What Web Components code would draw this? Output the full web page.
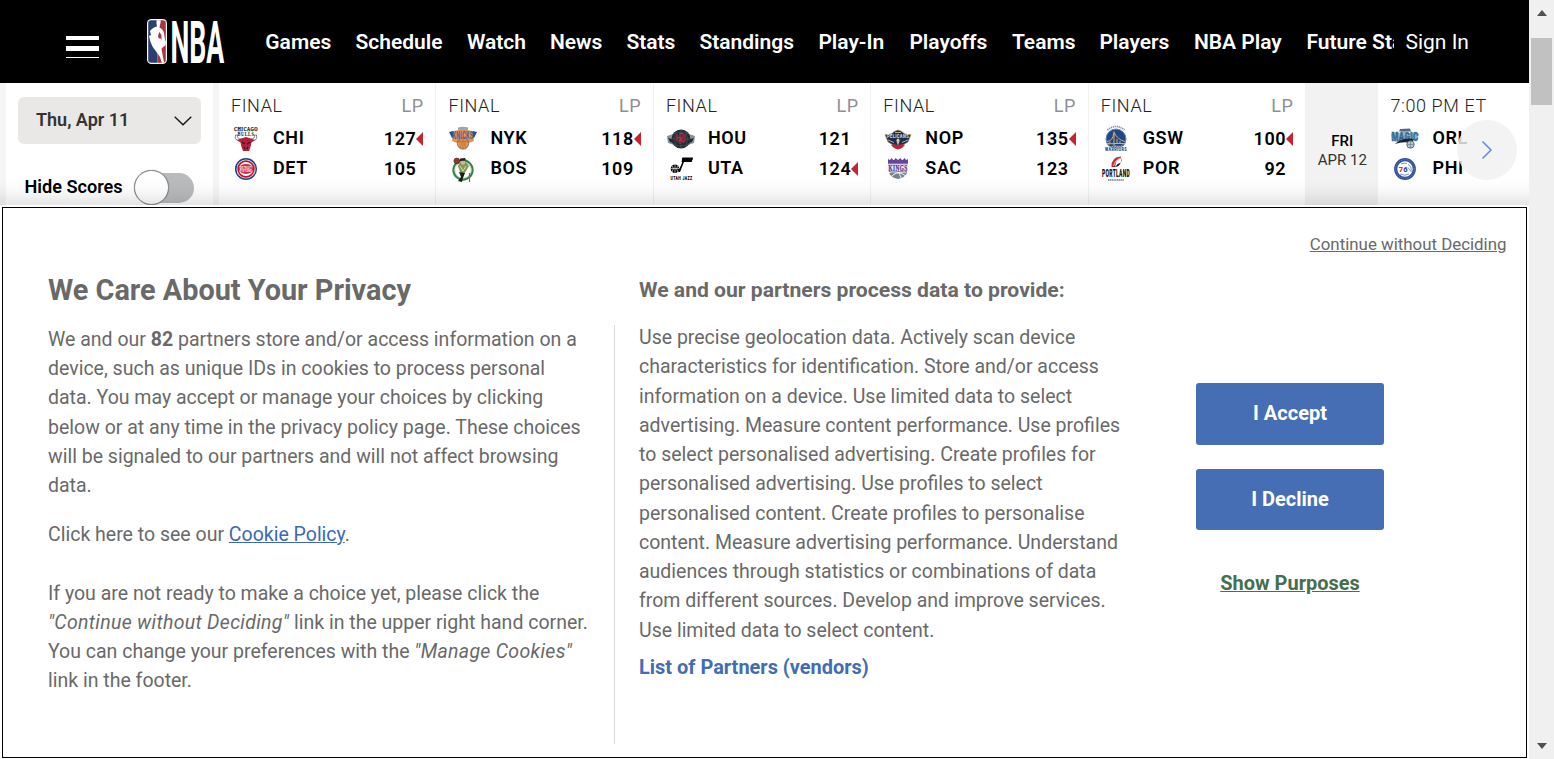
<!DOCTYPE html>
<html lang="en">
<head>
<meta charset="utf-8">
<title>NBA</title>
<style>
html,body{margin:0;height:100%;overflow:hidden;background:#fff}
body{font-family:Roboto,"Liberation Sans",sans-serif}
</style>
</head>
<body>
<nba-page></nba-page>
<script>
const define = (name, html, setup) => {
  const t = document.createElement('template');
  t.innerHTML = html;
  customElements.define(name, class extends HTMLElement {
    connectedCallback() {
      if (this.shadowRoot) return;
      const r = this.attachShadow({mode: 'open'});
      r.append(t.content.cloneNode(true));
      if (setup) setup(this, r);
    }
  });
};

const LOGOS = {
  CHI: `<g font-family="Liberation Serif" font-weight="700" text-anchor="middle"><text x="15" y="7" font-size="6" textLength="24" lengthAdjust="spacingAndGlyphs" fill="#111" stroke="#111" stroke-width=".25">CHICAGO</text><text x="15" y="12" font-size="5.600" textLength="17" lengthAdjust="spacingAndGlyphs" fill="#111">BULLS</text></g><path d="M4.500 11Q3 17 10 17L10 15Q6 15 6.500 11ZM25.500 11Q27 17 20 17L20 15Q24 15 23.500 11Z" fill="#fff" stroke="#333" stroke-width=".6"/><path d="M6 16L10 14.500L15 13L20 14.500L24 16L20.500 18.500L19.500 23L18 27H12L10.500 23L9.500 18.500Z" fill="#b4203c"/><path d="M11 18L14 20M19 18L16 20M13 23L14 25M17 23L16 25" stroke="#35121b" stroke-width="1.100"/>`,
  DET: `<circle cx="15" cy="15" r="10.300" fill="#e4e7ee" stroke="#1d428a" stroke-width="1.500"/><circle cx="15" cy="15" r="7.900" fill="#fff" stroke="#c8102e" stroke-width="1.600"/><ellipse cx="15" cy="15" rx="7.200" ry="5" fill="#c8304a"/><g font-family="Roboto" font-weight="700" text-anchor="middle" fill="#fff" font-size="4"><text x="15" y="14.800" textLength="12" lengthAdjust="spacingAndGlyphs">DETROIT</text><text x="15" y="18.200" textLength="12" lengthAdjust="spacingAndGlyphs">PISTONS</text></g>`,
  NYK: `<path d="M1 8L5 7L7 9H23L25 7L29 8L26 14H4Z" fill="#2b4f95"/><path d="M10 3.500Q15 2 20 3.500V6H10Z" fill="#8ba9ce"/><path d="M4 17L6 7L15 5L24 7L26 17L21 19H9Z" fill="#e2944a"/><circle cx="15" cy="19.500" r="5.700" fill="#ee9142" stroke="#3a6398" stroke-width=".7"/><path d="M9.500 18Q15 16 20.500 18M15 14V25M11 15.500Q15 19 12 24M19 15.500Q15 19 18 24" fill="none" stroke="#a86b3b" stroke-width=".7"/><text x="15" y="15" font-family="Roboto" font-weight="700" font-size="10" text-anchor="middle" textLength="21" lengthAdjust="spacingAndGlyphs" fill="#4a6590">KNICKS</text>`,
  BOS: `<circle cx="15" cy="16" r="9.600" fill="#fff" stroke="#37854f" stroke-width="2.200"/><circle cx="15" cy="16" r="8.200" fill="none" stroke="#abc9b0" stroke-width=".7"/><circle cx="8.800" cy="7" r="2.900" fill="#8a3b31" stroke="#50251c" stroke-width=".6"/><path d="M12 8L18 8L21 12L18 17L16 20L12 18L10 12Z" fill="#7e9b55"/><circle cx="15" cy="8.500" r="2.300" fill="#d5b294"/><path d="M11 18L17 19L15 24L14 28L10 27L13 23Z" fill="#171f19"/><path d="M12 4.500L17 4L18 6.500L12 7Z" fill="#222"/><path d="M12 12L15 17L18 12" stroke="#e6d4a7" fill="none"/><path d="M21.500 19V28" stroke="#c8463d" stroke-width="1.200"/>`,
  HOU: `<path d="M1 12L7 10L23 10L29 12L28 19L22 21L19 17H11L8 21L2 19Z" fill="#8a949a"/><path d="M2 13.500Q5 16 8 15L7 19L4 18ZM28 13.500Q25 16 22 15L23 19L26 18Z" fill="#22292e"/><circle cx="15" cy="15" r="9.500" fill="#252c32"/><path d="M7 10Q15 6 23 10M6 15H24M7 20Q15 24 23 20M15 6V24M10 7Q7 15 10 23M20 7Q23 15 20 23" fill="none" stroke="#555f66" stroke-width=".5"/><path d="M14 20V9.500H17V14H14L18 19M11 10V13.500H14M11 17.500V14M19 10V17H12" fill="none" stroke="#c32c47" stroke-width="1.100"/>`,
  UTA: `<path d="M12 18L16 9V4H27L25.500 8H18L14 18Z"/><path d="M16.500 3.500H27L25.500 8H15.500Z"/><circle cx="9" cy="14.800" r="4.300"/><path d="M5 14.500H13M9 10V19M6 11.500Q9 14.500 6 18M12 11.500Q9 14.500 12 18" stroke="#fff" stroke-width=".6" fill="none"/><text x="15.500" y="25.500" font-family="Roboto" font-weight="900" font-size="5" text-anchor="middle" textLength="22" lengthAdjust="spacingAndGlyphs">UTAH JAZZ</text>`,
  NOP: `<path d="M2 10.500Q9 11 11 7.500L15 6L19 7.500Q21 11 28 10.500L25 18L20 21L18 24H12L10 21L5 18Z" fill="#17304f" stroke="#a69371" stroke-width=".7"/><path d="M8 21L12 20L15 22L18 20L22 21L19 24L15 25.500L11 24Z" fill="#c51f39"/><path d="M13 16L15 14L17 16L15 23Z" fill="#e2c0a5" stroke="#473544" stroke-width=".6"/><path d="M5 16L11 18.500M25 16L19 18.500M12 8.500H18" stroke="#bba98a" stroke-width="1"/><text x="15" y="14" font-family="Roboto" font-weight="700" font-size="6" text-anchor="middle" textLength="22" lengthAdjust="spacingAndGlyphs" fill="#e8e3db">PELICANS</text>`,
  SAC: `<path d="M5 4Q6 8 8.500 4Q11 8 12.500 4L15 6L17.500 4Q19 8 21.500 4Q24 8 25 4V10H5Z" fill="#64459b"/><path d="M5 10H25V16.500H5Z" fill="#efeaf5"/><path d="M6 17H24L23.500 20Q21 24 15 25Q9 24 6.500 20Z" fill="#78848d"/><path d="M6 18.500Q13 16 23.500 22M8 23Q11 18 23 18M15 18Q17 20 18.500 25" fill="none" stroke="#fff" stroke-width=".9"/><path d="M5 10H25" stroke="#b5a1d4" stroke-width="1"/><text x="15" y="16.500" font-family="Liberation Serif" font-weight="700" font-size="7.200" text-anchor="middle" textLength="19" lengthAdjust="spacingAndGlyphs" fill="#59358c" stroke="#59358c" stroke-width=".25">KINGS</text>`,
  GSW: `<circle cx="15" cy="15" r="10" fill="#214688" stroke="#6d86ae" stroke-width="1"/><path d="M6 17.500Q12 17 13 8.500Q17 16 24 17.500M13 7.500V22M6 19.500H24M9 17.500V20M16 15V20M19 17V20" fill="none" stroke="#d9b05c" stroke-width="1"/><path d="M7 21Q11 18 15 22Q19 24 23 20" fill="none" stroke="#a08d5c" stroke-width=".8"/><text x="15" y="27.300" font-family="Roboto" font-weight="900" font-size="5.600" text-anchor="middle" textLength="22" lengthAdjust="spacingAndGlyphs" fill="#244988" stroke="#fff" stroke-width=".8" paint-order="stroke">WARRIORS</text><path d="M6.500 6Q15 -1 23.500 6" fill="none" stroke="#7188b1" stroke-width="1.700" stroke-dasharray="1.200 .8"/>`,
  POR: `<path d="M10.500 13Q10 3 20 2.500L20 4.500Q14 5 14.500 13Z" fill="#c6283a"/><path d="M12.500 12Q14 6 20 4M14.500 12Q16 8 20 6.500" fill="none" stroke="#fff" stroke-width=".7"/><path d="M20 3.500V9Q16 9 15 12.500H11.500Q18 14.500 20.500 7Z" fill="#111"/><text x="15" y="23.300" font-family="Roboto" font-weight="900" font-size="11" text-anchor="middle" textLength="28" lengthAdjust="spacingAndGlyphs" fill="#111">PORTLAND</text><path d="M7 26H23" stroke="#333" stroke-width="1.200" stroke-dasharray="1.300 .5"/>`,
  ORL: `<path d="M1 10L5 8L10 9L14 7L18 9L26 8L29 10L27 17H20L8 18L2 16.500Z" fill="#a3b5c0"/><path d="M10 5L20 4.500L21 7.500H9Z" fill="#566a76"/><text x="15" y="17" font-family="Roboto" font-weight="900" font-size="12" text-anchor="middle" textLength="27" lengthAdjust="spacingAndGlyphs" fill="#2f80bb" stroke="#31546d" stroke-width=".4">MAGIC</text><path d="M5 20Q13 13 24 15L21 19Q13 17 5 20Z" fill="#16242d"/><circle cx="20.500" cy="20.500" r="3.700" fill="#b8c5ce" stroke="#476878" stroke-width=".9"/><path d="M17 20.500H24M20.500 17V24" stroke="#617887" stroke-width=".6"/>`,
  PHI: `<circle cx="15" cy="15" r="9.300" fill="#fff" stroke="#31509a" stroke-width="3.200"/><circle cx="15" cy="15" r="9.300" fill="none" stroke="#b5c4de" stroke-width=".6" stroke-dasharray=".8 1.400"/><text x="8.800" y="18" font-family="Roboto" font-weight="900" font-size="7.500" fill="#ce3148">7</text><text x="13.300" y="18" font-family="Roboto" font-weight="900" font-size="7.500" fill="#2c5396">6</text><path d="M18 10.500Q22 12 21 18M18 13.500L20.500 17M10 20Q15 22.500 19 20M11 10Q14 8.500 17 9.500" stroke="#5d7cb2" stroke-width=".8" fill="none"/>`
};

define('nba-logo', `<style>:host{display:block;width:82px;height:50px}svg{display:block;overflow:visible}</style>
<svg width="82" height="50" viewBox="0 0 82 50">
<defs><clipPath id="c"><rect x="1.200" y="3.200" width="17.600" height="42.600" rx="3"/></clipPath></defs>
<rect x="0" y="2" width="20" height="45" rx="4.500" fill="#fff"/>
<g clip-path="url(#c)"><rect x="1" y="3" width="9.500" height="45" fill="#2b3e75"/><rect x="10.500" y="3" width="9" height="45" fill="#a83640"/>
<path d="M9.500 3H13.500Q14 5 13 7.500L12.500 10.500Q16 12 17 16L18 23Q20 25 18.500 28.500L16 30L14.500 32L16 40L17.500 48H15.500L13 40L9.500 35Q5 30 3.500 25L2 19L4 18L3 14Q6 10 10 9.500L9.500 7Z" fill="#fff"/><path d="M12.300 15L14.500 18L14.500 23L13 21L12 22L11 19Z" fill="#a83640"/></g>
<text transform="translate(23.500 45.700) scale(.43 1)" x="0" y="0" font-family="Roboto" font-weight="700" font-size="60" textLength="125" lengthAdjust="spacingAndGlyphs" fill="#fff">NBA</text></svg>`);

define('nba-menu', `<style>:host{display:flex;flex-direction:column;width:33px;padding-top:20px}i{display:block;background:#fff;height:4px;margin-bottom:6px}i:nth-of-type(2){height:5px}i:nth-of-type(3){height:1px;margin:0}</style><i></i><i></i><i></i>`);

define('nba-header', `<style>
:host{display:flex;height:83px;background:#000;color:#fff;box-sizing:border-box;font-size:21px;line-height:24px}
nba-menu{margin:16px 0 0 66px}nba-logo{margin:17px 0 0 48px;flex:none}
nav{display:flex;gap:24px;margin:30px 0 0 36.300px;width:1128.700px;overflow:hidden;white-space:nowrap;font-weight:600;flex:none}
a{flex:none}.s{margin:30px 0 0 11.500px;font-weight:400;white-space:nowrap}
</style><nba-menu></nba-menu><nba-logo></nba-logo><nav></nav><a class="s">Sign In</a>`, (h, r) => {
  const nav = r.querySelector('nav');
  for (const [t, w] of [['Games',66.100],['Schedule',87.500],['Watch',59],['News',52.500],['Stats',49],['Standings',95],['Play-In',67],['Playoffs',78.500],['Teams',63.500],['Players',70.500],['NBA Play',88.500],['Future Sta',100]]) {
    const a = document.createElement('a'); a.textContent = t; a.style.width = w + 'px'; nav.append(a);
  }
});

define('date-panel', `<style>
:host{display:block;width:207px;height:122px;background:#fff;overflow:hidden;margin:0 6px;flex:none}
.d{display:flex;align-items:center;justify-content:space-between;box-sizing:border-box;width:183px;height:47px;margin:14px 0 0 12px;padding:0 9px 0 18px;background:#e9e8e6;border-radius:6px;font-size:18px;font-weight:600;color:#333}
.d span,.h span{margin-top:-2px}
.h{display:flex;align-items:center;margin:25.500px 0 0 18.500px;height:36px;font-size:18.100px;font-weight:600;color:#000}
.t{display:flex;align-items:center;width:59px;height:30px;border-radius:15px;background:#b9babc;margin-left:12px}
.t i{display:block;width:33px;height:33px;border-radius:50%;background:#fff;border:1px solid #888;flex:none;margin-left:-.5px;box-shadow:0 0 1px #777}
</style><div class="d"><span>Thu, Apr 11</span><svg width="18" height="10" viewBox="0 0 18 10"><path d="M.7.8L9 8.800L17.300.8" fill="none" stroke="#111" stroke-width="1.300"/></svg></div><div class="h"><span>Hide Scores</span><div class="t"><i></i></div></div>`);

define('team-row', `<style>
:host{display:flex;align-items:center;height:30px;font-size:18px;font-weight:600;letter-spacing:.6px;color:#000}
svg{width:30px;height:30px;flex:none;display:block;overflow:visible}.n{margin:-4px 0 0 12px;flex:1}.p{margin-top:-2px}
i{width:0;height:0;border:7px solid transparent;border-left:0;border-right:7px solid transparent;margin:0 1px 0 0}
:host([win]) i{border-right-color:#c4242c}
</style><svg viewBox="0 0 30 30"></svg><span class="n"></span><span class="p"></span><i></i>`, (h, r) => {
  r.querySelector('svg').innerHTML = LOGOS[h.getAttribute('team')];
  r.querySelector('.n').textContent = h.getAttribute('team');
  r.querySelector('.p').textContent = h.getAttribute('score') || '';
});

define('game-card', `<style>
:host{display:block;box-sizing:border-box;width:217.450px;height:122px;padding:11px 11px 0 12px;border-right:1px solid #f1f1f2;background:#fff;flex:none}
.h{display:flex;justify-content:space-between;font-size:18px;line-height:24px;letter-spacing:.6px;color:#222;margin-bottom:6px;height:24px;font-weight:350}
.l{color:#8f8f95;margin-right:.7px;font-weight:400}
</style><div class="h"><span></span><span class="l"></span></div><slot></slot>`, (h, r) => {
  const s = r.querySelectorAll('span');
  s[0].textContent = h.getAttribute('status'); s[1].textContent = h.getAttribute('link') || '';
});

define('day-divider', `<style>
:host{display:flex;flex-direction:column;align-items:center;width:72.300px;height:122px;background:#f2f2f2;flex:none;font-size:15px;line-height:19px}
b{font-weight:500;margin-top:49px;color:#000}span{color:#333}
</style><b>FRI</b><span>APR 12</span>`);

define('score-strip', `<style>
:host{display:flex;position:relative;height:122px;background:#f5f5f5;overflow:hidden}
.n{position:absolute;left:1457px;top:37px;width:60px;height:60px;border-radius:50%;background:rgba(241,241,241,.83);display:flex;align-items:center;justify-content:center}
.g{position:absolute;inset:auto 0 0 0;height:26px;background:linear-gradient(#0000,#00000003 25%,#00000008 50%,#0000001a)}
</style><date-panel></date-panel>
<game-card status="FINAL" link="LP"><team-row team="CHI" score="127" win></team-row><team-row team="DET" score="105"></team-row></game-card>
<game-card status="FINAL" link="LP"><team-row team="NYK" score="118" win></team-row><team-row team="BOS" score="109"></team-row></game-card>
<game-card status="FINAL" link="LP"><team-row team="HOU" score="121"></team-row><team-row team="UTA" score="124" win></team-row></game-card>
<game-card status="FINAL" link="LP"><team-row team="NOP" score="135" win></team-row><team-row team="SAC" score="123"></team-row></game-card>
<game-card status="FINAL" link="LP"><team-row team="GSW" score="100" win></team-row><team-row team="POR" score="92"></team-row></game-card>
<day-divider></day-divider>
<game-card status="7:00 PM ET"><team-row team="ORL"></team-row><team-row team="PHI"></team-row></game-card>
<div class="n"><svg width="12" height="20" viewBox="0 0 12 20"><path d="M1.500 1.500L10 10L1.500 18.500" fill="none" stroke="#5c8ae6" stroke-width="1.500"/></svg></div><div class="g"></div>`);

define('consent-button', `<style>:host{display:flex;align-items:center;justify-content:center;width:188px;height:61.500px;border-radius:3px;background:#466eb5;color:#fff;font-size:20px;font-weight:700}</style><slot></slot>`);

define('privacy-dialog', `<style>
:host{display:block;box-sizing:border-box;width:1525px;height:551px;margin:2px 0 0 2px;border:1px solid #000;background:#fff;color:#696969;font-size:19.500px;line-height:29.250px;white-space:nowrap}
.c{display:block;text-align:right;margin:26px 19.500px 0 0;font-size:16.870px;line-height:20px;text-decoration:underline}
.m{display:flex;height:490px}
.l{width:566px;margin-left:45px}.r{width:530px;padding-left:25px}
h2{font-size:28.830px;line-height:34px;margin:19px 0 17.750px}
h3{font-size:21.130px;line-height:24px;margin:24px 0 21px}
em{letter-spacing:.3px}
p{margin:0}.k{margin:19.500px 0 29.600px}.a{color:#3c69b4;text-decoration:underline}
.r{box-sizing:border-box}.x{border-left:1px solid #d8d8d8;margin-top:71px;height:419px;margin-right:-1px}
.v{color:#446cb3;font-weight:700;margin-top:8px;font-size:19.970px}
.b{display:flex;flex-direction:column;align-items:center;width:188px;margin:129px 0 0 52px}
consent-button+consent-button{margin-top:24px}.s{color:#45704d;font-size:19.950px;font-weight:700;text-decoration:underline;margin-top:39px}
</style><a class="c">Continue without Deciding</a>
<div class="m"><div class="l"><h2>We Care About Your Privacy</h2>
<p>We and our <b>82</b> partners store and/or access information on a<br>device, such as unique IDs in cookies to process personal<br>data. You may accept or manage your choices by clicking<br>below or at any time in the privacy policy page. These choices<br>will be signaled to our partners and will not affect browsing<br>data.</p>
<p class="k">Click here to see our <a class="a">Cookie Policy</a>.</p>
<p>If you are not ready to make a choice yet, please click the<br><em>"Continue without Deciding"</em> link in the upper right hand corner.<br>You can change your preferences with the <em>"Manage Cookies"</em><br>link in the footer.</p></div>
<div class="x"></div>
<div class="r"><h3>We and our partners process data to provide:</h3>
<p>Use precise geolocation data. Actively scan device<br>characteristics for identification. Store and/or access<br>information on a device. Use limited data to select<br>advertising. Measure content performance. Use profiles<br>to select personalised advertising. Create profiles for<br>personalised advertising. Use profiles to select<br>personalised content. Create profiles to personalise<br>content. Measure advertising performance. Understand<br>audiences through statistics or combinations of data<br>from different sources. Develop and improve services.<br>Use limited data to select content.</p>
<p class="v">List of Partners (vendors)</p></div>
<div class="b"><consent-button>I Accept</consent-button><consent-button>I Decline</consent-button><a class="s">Show Purposes</a></div></div>`);

define('page-scrollbar', `<style>
:host{display:flex;flex-direction:column;align-items:center;justify-content:space-between;height:759px;background:#f0f0f0;box-sizing:border-box;padding:10px 0}
i{border:5.500px solid transparent;border-top:0;border-bottom:6px solid #505050}
.t{width:21px;height:67px;background:#c1c1c1;margin:22px 0 auto 0}
.d{border:5.500px solid transparent;border-bottom:0;border-top:6px solid #505050}
</style><i></i><div class="t"></div><i class="d"></i>`);

define('nba-page', `<style>:host{display:grid;grid-template-columns:1529px 25px;width:1554px;height:759px;overflow:hidden;background:#fff}</style>
<main><nba-header></nba-header><score-strip></score-strip><privacy-dialog></privacy-dialog></main><page-scrollbar></page-scrollbar>`);
</script>
</body>
</html>
